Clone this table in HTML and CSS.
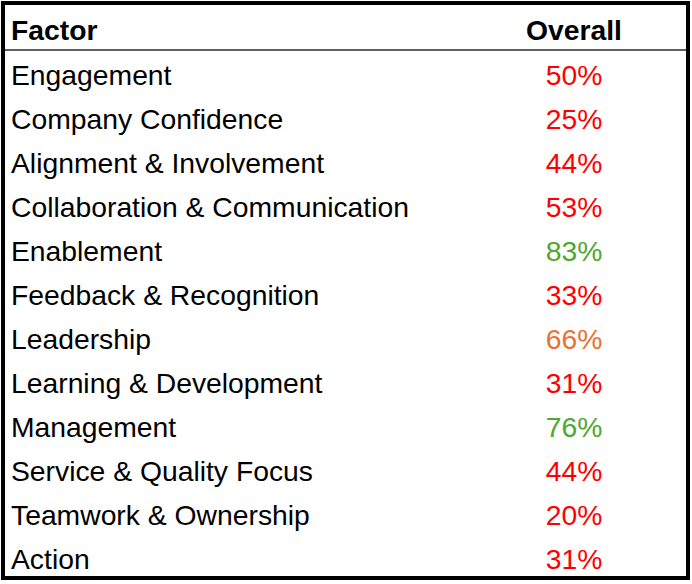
FILE: index.html
```html
<!DOCTYPE html>
<html>
<head>
<meta charset="utf-8">
<link rel="stylesheet" href="styles.css">
</head>
<body>
<div class="sheet">
  <div class="row head">
    <div class="factor">Factor</div>
    <div class="overall">Overall</div>
  </div>
  <div class="row"><div class="factor">Engagement</div><div class="overall red">50%</div></div>
  <div class="row"><div class="factor">Company Confidence</div><div class="overall red">25%</div></div>
  <div class="row"><div class="factor">Alignment &amp; Involvement</div><div class="overall red">44%</div></div>
  <div class="row"><div class="factor">Collaboration &amp; Communication</div><div class="overall red">53%</div></div>
  <div class="row"><div class="factor">Enablement</div><div class="overall green">83%</div></div>
  <div class="row"><div class="factor">Feedback &amp; Recognition</div><div class="overall red">33%</div></div>
  <div class="row"><div class="factor">Leadership</div><div class="overall orange">66%</div></div>
  <div class="row"><div class="factor">Learning &amp; Development</div><div class="overall red">31%</div></div>
  <div class="row"><div class="factor">Management</div><div class="overall green">76%</div></div>
  <div class="row"><div class="factor">Service &amp; Quality Focus</div><div class="overall red">44%</div></div>
  <div class="row"><div class="factor">Teamwork &amp; Ownership</div><div class="overall red">20%</div></div>
  <div class="row"><div class="factor">Action</div><div class="overall red">31%</div></div>
</div>
</body>
</html>
```
FILE: styles.css
```css
html, body {
  margin: 0;
  padding: 0;
  background: #fff;
}
body {
  padding: 1px 0 0 1px;
  font-family: "Liberation Sans", Arial, sans-serif;
  color: #000;
}
.sheet {
  box-sizing: border-box;
  width: 689px;
  height: 579px;
  border: 4px solid #000;
  overflow: hidden;
}
.row {
  display: grid;
  grid-template-columns: 1fr 224px;
  height: 44px;
  box-sizing: border-box;
  padding-top: 8px;
  font-size: 28.3px;
  line-height: 32px;
}
.row.head {
  padding-top: 9px;
  font-weight: bold;
  border-bottom: 2px solid #5f5f5f;
  height: 46px;
}
.factor {
  padding-left: 6px;
  white-space: nowrap;
}
.overall {
  text-align: center;
}
.red { color: #ff0000; }
.green { color: #4ea72e; }
.orange { color: #e97132; }
```
